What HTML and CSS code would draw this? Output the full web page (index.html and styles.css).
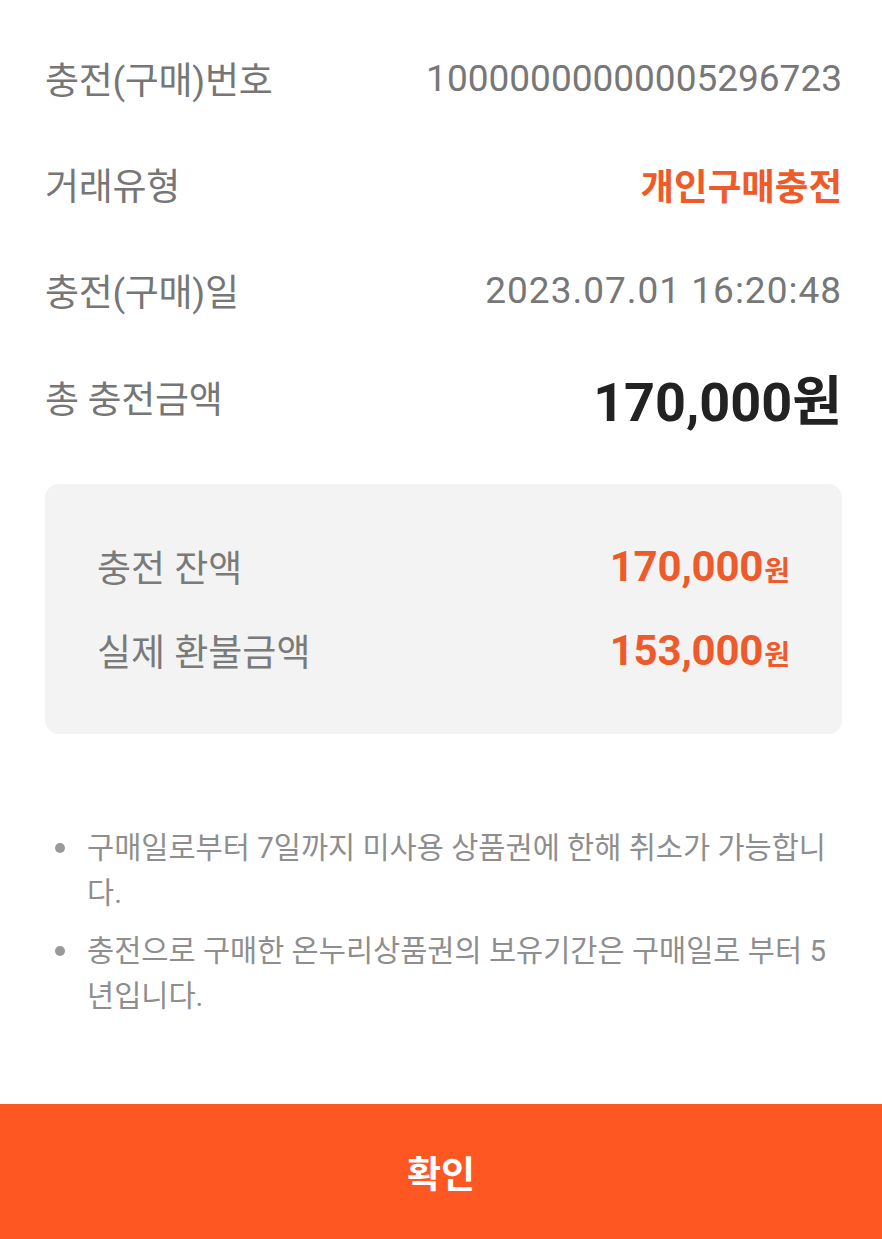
FILE: index.html
```html
<!DOCTYPE html>
<html lang="ko">
<head>
<meta charset="utf-8">
<link rel="stylesheet" href="styles.css">
</head>
<body>
<div class="page">
  <div class="content">
    <div class="row">
      <span class="label">충전(구매)번호</span>
      <span class="value">10000000000005296723</span>
    </div>
    <div class="row">
      <span class="label">거래유형</span>
      <span class="value type">개인구매충전</span>
    </div>
    <div class="row">
      <span class="label">충전(구매)일</span>
      <span class="value date">2023.07.01 16:20:48</span>
    </div>
    <div class="row total-row">
      <span class="label">총 충전금액</span>
      <span class="total">170,000원</span>
    </div>
    <div class="box">
      <div class="box-row">
        <span class="box-label">충전 잔액</span>
        <span class="box-amount">170,000<span class="won">원</span></span>
      </div>
      <div class="box-row">
        <span class="box-label">실제 환불금액</span>
        <span class="box-amount">153,000<span class="won">원</span></span>
      </div>
    </div>
    <ul class="notes">
      <li>구매일로부터 7일까지 미사용 상품권에 한해 취소가 가능합니다.</li>
      <li>충전으로 구매한 온누리상품권의 보유기간은 구매일로 부터 5년입니다.</li>
    </ul>
  </div>
  <button class="confirm">확인</button>
</div>
</body>
</html>
```
FILE: styles.css
```css
html, body {
  margin: 0;
  padding: 0;
  background: #ffffff;
}
body {
  font-family: Roboto, "Noto Sans CJK KR", sans-serif;
}
.page {
  min-height: 1239px;
  display: flex;
  flex-direction: column;
}
.content {
  padding: 25px 40px 0 45px;
}
.row {
  height: 106px;
  display: flex;
  align-items: center;
  justify-content: space-between;
}
.total-row {
  height: 108px;
}
.label {
  font-size: 37px;
  color: #767676;
  letter-spacing: -0.3px;
}
.value {
  font-size: 37px;
  color: #777777;
}
.value.date {
  letter-spacing: 1px;
}
.value.type {
  font-size: 36.5px;
  font-weight: 700;
  color: #ef5a29;
}
.total {
  font-size: 54px;
  font-weight: 700;
  color: #222222;
}
.box {
  margin-top: 33px;
  background: #f3f3f3;
  border-radius: 14px;
  padding: 40px 52px 42px 52px;
}
.box-row {
  height: 84px;
  display: flex;
  align-items: center;
  justify-content: space-between;
}
.box-label {
  font-size: 37px;
  color: #7a7a7a;
}
.box-amount {
  font-size: 42px;
  font-weight: 700;
  color: #ee5a2a;
  letter-spacing: -0.2px;
}
.won {
  font-size: 28px;
  letter-spacing: 0;
  margin-left: 1px;
}
.notes {
  list-style: none;
  margin: 92px 0 0 0;
  padding: 0 0 0 42px;
}
.notes li {
  position: relative;
  font-size: 29.5px;
  line-height: 45px;
  color: #8e8e8e;
  margin-bottom: 13px;
}
.notes li::before {
  content: "";
  position: absolute;
  left: -32px;
  top: 17px;
  width: 10px;
  height: 10px;
  border-radius: 50%;
  background: #999999;
}
.confirm {
  margin-top: auto;
  height: 135px;
  width: 100%;
  border: 0;
  background: #fe5722;
  color: #ffffff;
  font-family: Roboto, "Noto Sans CJK KR", sans-serif;
  font-size: 37px;
  font-weight: 700;
  padding: 0;
}
```
